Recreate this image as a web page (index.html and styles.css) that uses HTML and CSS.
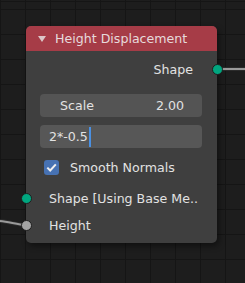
FILE: index.html
```html
<!DOCTYPE html>
<html>
<head>
	<meta charset="utf-8" />
	<title>Height Displacement</title>
	<link rel="stylesheet" href="styles.css">
</head>
<body>
	<div class="editor">
		<svg class="links" width="245" height="283" viewBox="0 0 245 283">
			<path class="wire-edge" d="M216 69 L245 69" />
			<path class="wire" d="M216 69 L245 69" />
			<path class="wire-edge" d="M0 221 C10 222 18 225 26 225" />
			<path class="wire" d="M0 221 C10 222 18 225 26 225" />
		</svg>
		<div class="node">
			<div class="node-head">
				<span class="arrow"></span>
				<span class="title">Height Displacement</span>
			</div>
			<div class="node-body">
				<div class="row out">
					<span>Shape</span>
					<i class="socket green right"></i>
				</div>
				<div class="field num">
					<span>Scale</span>
					<span>2.00</span>
				</div>
				<div class="field edit">
					<span>2*-0.5</span><span class="caret"></span>
				</div>
				<div class="row check">
					<span class="box">
						<svg width="15" height="15" viewBox="0 0 15 15"><path d="M3.3 7.6 L6.2 10.5 L11.8 4.4" /></svg>
					</span>
					<span>Smooth Normals</span>
				</div>
				<div class="row in first">
					<i class="socket green left"></i>
					<span>Shape [Using Base Me..</span>
				</div>
				<div class="row in">
					<i class="socket grey left"></i>
					<span>Height</span>
				</div>
			</div>
		</div>
	</div>
</body>
</html>
```

FILE: styles.css
```css
*{
	padding: 0;
	margin: 0;
	box-sizing: border-box;
}
body{
	background: #1d1d1d;
	font-family: "DejaVu Sans", sans-serif;
	font-size: 12.6px;
	color: #e2e2e2;
}
.editor{
	position: relative;
	width: 245px;
	height: 283px;
	overflow: hidden;
	background-color: #1d1d1d;
	background-image:
		repeating-linear-gradient(90deg, #151515 0 1px, transparent 1px 25px),
		repeating-linear-gradient(0deg, #151515 0 1px, transparent 1px 25px);
	background-position: 0 0, 0 2px;
}
.links{
	position: absolute;
	left: 0;
	top: 0;
}
.wire-edge{
	fill: none;
	stroke: #2b2b2b;
	stroke-width: 4;
}
.wire{
	fill: none;
	stroke: #9a9a9a;
	stroke-width: 2;
}
.node{
	position: absolute;
	left: 26px;
	top: 26px;
	width: 191px;
	height: 217px;
	background: #3f3f3f;
	border-radius: 5px;
	box-shadow: 2px 3px 6px rgba(0,0,0,0.45);
}
.node-head{
	height: 25px;
	background: #a63c47;
	border-radius: 5px 5px 0 0;
	display: flex;
	align-items: center;
	padding-left: 12px;
	color: #e6dadb;
	font-size: 12.6px;
}
.arrow{
	width: 0;
	height: 0;
	border-left: 4px solid transparent;
	border-right: 4px solid transparent;
	border-top: 6px solid #dcc6c8;
	margin-right: 9px;
}
.node-body{
	padding: 8px 0 0;
	display: flex;
	flex-direction: column;
}
.row{
	position: relative;
	display: flex;
	align-items: center;
	height: 20px;
}
.out{
	justify-content: flex-end;
	padding-right: 24px;
}
.field{
	height: 23px;
	margin: 0 15px 0 14px;
	border-radius: 4px;
	background: #545454;
	display: flex;
	align-items: center;
}
.num{
	margin-top: 15px;
	justify-content: space-between;
	padding: 0 18px 0 20px;
}
.edit{
	margin-top: 8px;
	padding-left: 9px;
	background: #575757;
}
.caret{
	width: 2px;
	height: 20px;
	background: #4a90e2;
	margin-left: 1px;
}
.check{
	margin-top: 8px;
	height: 22px;
	padding-left: 18px;
}
.box{
	width: 15px;
	height: 15px;
	border-radius: 3px;
	background: #4772b3;
	margin-right: 11px;
}
.box svg path{
	fill: none;
	stroke: #f0f0f0;
	stroke-width: 2;
}
.in{
	height: 22px;
	padding-left: 23px;
	margin-top: 5px;
}
.in.first{
	margin-top: 9px;
}
.socket{
	position: absolute;
	top: 50%;
	width: 11px;
	height: 11px;
	margin-top: -5.5px;
	border-radius: 50%;
	border: 1px solid #1e1e1e;
}
.socket.right{
	right: -5.5px;
}
.socket.left{
	left: -5.5px;
}
.green{
	background: #00a67f;
}
.grey{
	background: #a3a3a3;
}
```
